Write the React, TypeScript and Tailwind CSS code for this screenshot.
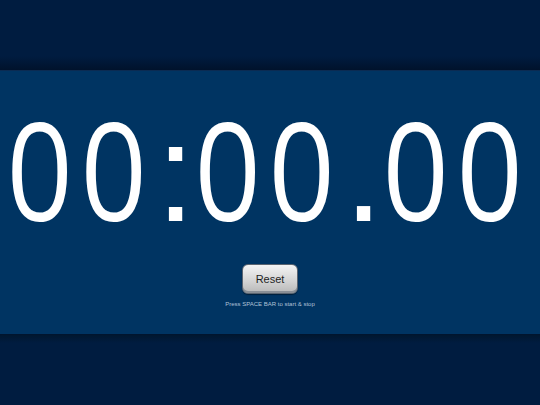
import React from "react";

const chars = ["0", "0", ":", "0", "0", ".", "0", "0"];

export default function App() {
  return (
    <div className="flex h-[405px] w-[540px] flex-col overflow-hidden bg-[#001c40]" style={{ fontFamily: '"Liberation Sans", Arial, sans-serif' }}>
      <div className="h-[71px] shrink-0 border-b border-[#0b2b52] bg-[linear-gradient(to_bottom,#001c40_0px,#001c40_56px,#00122b_70px)]" />
      <div className="flex flex-1 flex-col items-center bg-[#003462]">
        <div className="mt-[31px] flex w-full items-baseline justify-start pl-[3px] leading-none text-white">
          {chars.map((c, i) =>
            c === "0" ? (
              <span
                key={i}
                className="flex w-[74px] justify-center text-[135px] leading-none"
                style={{ fontFamily: '"Open Sans", "Noto Sans", sans-serif' }}
              >
                <span className="inline-block scale-x-[0.86]">{c}</span>
              </span>
            ) : (
              <span key={i} className="flex w-[40px] justify-center pl-[9px] text-[139px] leading-none">
                {c}
              </span>
            )
          )}
        </div>
        <button className="mt-[22px] h-[30px] w-[56px] rounded-[6px] border border-[#5a6470] bg-[linear-gradient(to_bottom,#f4f4f4,#d2d2d2_60%,#b8b8b8)] text-[11px] text-[#1e1e1e] shadow-[inset_0_-2px_0_#8a8f96,0_1px_1px_rgba(0,0,0,0.4)]">
          Reset
        </button>
        <div className="mt-[7px] text-[6px] leading-none text-[#b0c2d8]">Press SPACE BAR to start &amp; stop</div>
      </div>
      <div className="h-[71px] shrink-0 border-t border-[#00152f] bg-[linear-gradient(to_bottom,#00172f,#001c40_8px)]" />
    </div>
  );
}
